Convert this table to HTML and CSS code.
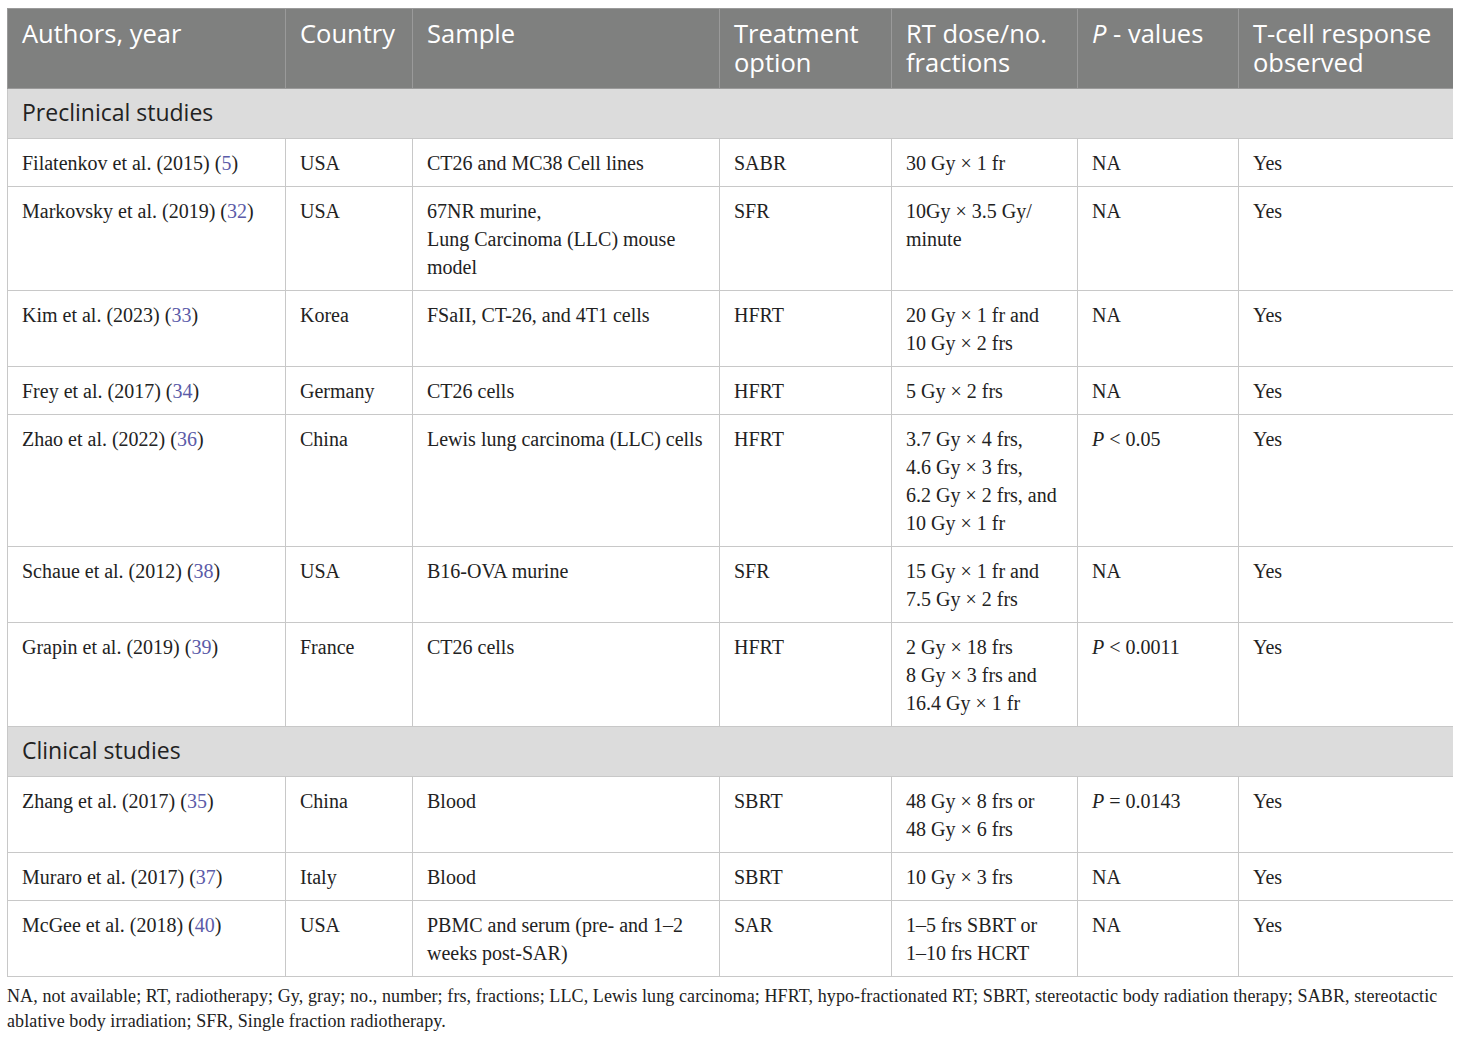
FILE: index.html
```html
<!DOCTYPE html>
<html>
<head>
<meta charset="utf-8">
<link rel="stylesheet" href="styles.css">
</head>
<body>
<table class="data">
  <colgroup>
    <col class="c1"><col class="c2"><col class="c3"><col class="c4"><col class="c5"><col class="c6"><col class="c7">
  </colgroup>
  <thead>
    <tr>
      <th>Authors, year</th>
      <th>Country</th>
      <th>Sample</th>
      <th>Treatment option</th>
      <th>RT dose/no. fractions</th>
      <th><i>P</i> - values</th>
      <th>T-cell response observed</th>
    </tr>
  </thead>
  <tbody>
    <tr class="section"><td colspan="7">Preclinical studies</td></tr>
    <tr>
      <td>Filatenkov et al. (2015) (<a class="ref">5</a>)</td>
      <td>USA</td>
      <td>CT26 and MC38 Cell lines</td>
      <td>SABR</td>
      <td>30 Gy × 1 fr</td>
      <td>NA</td>
      <td>Yes</td>
    </tr>
    <tr>
      <td>Markovsky et al. (2019) (<a class="ref">32</a>)</td>
      <td>USA</td>
      <td>67NR murine,<br>Lung Carcinoma (LLC) mouse model</td>
      <td>SFR</td>
      <td>10Gy × 3.5 Gy/ minute</td>
      <td>NA</td>
      <td>Yes</td>
    </tr>
    <tr>
      <td>Kim et al. (2023) (<a class="ref">33</a>)</td>
      <td>Korea</td>
      <td>FSaII, CT-26, and 4T1 cells</td>
      <td>HFRT</td>
      <td>20 Gy × 1 fr and<br>10 Gy × 2 frs</td>
      <td>NA</td>
      <td>Yes</td>
    </tr>
    <tr>
      <td>Frey et al. (2017) (<a class="ref">34</a>)</td>
      <td>Germany</td>
      <td>CT26 cells</td>
      <td>HFRT</td>
      <td>5 Gy × 2 frs</td>
      <td>NA</td>
      <td>Yes</td>
    </tr>
    <tr>
      <td>Zhao et al. (2022) (<a class="ref">36</a>)</td>
      <td>China</td>
      <td>Lewis lung carcinoma (LLC) cells</td>
      <td>HFRT</td>
      <td>3.7 Gy × 4 frs,<br>4.6 Gy × 3 frs,<br>6.2 Gy × 2 frs, and<br>10 Gy × 1 fr</td>
      <td><i>P</i> &lt; 0.05</td>
      <td>Yes</td>
    </tr>
    <tr>
      <td>Schaue et al. (2012) (<a class="ref">38</a>)</td>
      <td>USA</td>
      <td>B16-OVA murine</td>
      <td>SFR</td>
      <td>15 Gy × 1 fr and<br>7.5 Gy × 2 frs</td>
      <td>NA</td>
      <td>Yes</td>
    </tr>
    <tr>
      <td>Grapin et al. (2019) (<a class="ref">39</a>)</td>
      <td>France</td>
      <td>CT26 cells</td>
      <td>HFRT</td>
      <td>2 Gy × 18 frs<br>8 Gy × 3 frs and<br>16.4 Gy × 1 fr</td>
      <td><i>P</i> &lt; 0.0011</td>
      <td>Yes</td>
    </tr>
    <tr class="section"><td colspan="7">Clinical studies</td></tr>
    <tr>
      <td>Zhang et al. (2017) (<a class="ref">35</a>)</td>
      <td>China</td>
      <td>Blood</td>
      <td>SBRT</td>
      <td>48 Gy × 8 frs or<br>48 Gy × 6 frs</td>
      <td><i>P</i> = 0.0143</td>
      <td>Yes</td>
    </tr>
    <tr>
      <td>Muraro et al. (2017) (<a class="ref">37</a>)</td>
      <td>Italy</td>
      <td>Blood</td>
      <td>SBRT</td>
      <td>10 Gy × 3 frs</td>
      <td>NA</td>
      <td>Yes</td>
    </tr>
    <tr>
      <td>McGee et al. (2018) (<a class="ref">40</a>)</td>
      <td>USA</td>
      <td>PBMC and serum (pre- and 1–2 weeks post-SAR)</td>
      <td>SAR</td>
      <td>1–5 frs SBRT or<br>1–10 frs HCRT</td>
      <td>NA</td>
      <td>Yes</td>
    </tr>
  </tbody>
</table>
<p class="note">NA, not available; RT, radiotherapy; Gy, gray; no., number; frs, fractions; LLC, Lewis lung carcinoma; HFRT, hypo-fractionated RT; SBRT, stereotactic body radiation therapy; SABR, stereotactic ablative body irradiation; SFR, Single fraction radiotherapy.</p>
</body>
</html>
```
FILE: styles.css
```css
body {
  margin: 8px 7px;
  background: #ffffff;
  font-family: "Liberation Serif", "Times New Roman", serif;
  color: #222222;
}
.data {
  width: 1446px;
  border-collapse: collapse;
  table-layout: fixed;
  border: 1px solid #c8c8c8;
}
.c1 { width: 278px; }
.c2 { width: 127px; }
.c3 { width: 307px; }
.c4 { width: 172px; }
.c5 { width: 186px; }
.c6 { width: 161px; }
.c7 { width: 215px; }
.data th {
  background: #7f807f;
  color: #ffffff;
  font-family: "Open Sans", "Noto Sans", sans-serif;
  font-weight: 400;
  font-size: 25.5px;
  line-height: 29px;
  text-align: left;
  vertical-align: top;
  padding: 10px 14px 11px 14px;
  border: 1px solid #9a9a9a;
}
.data td {
  font-size: 20px;
  line-height: 28px;
  vertical-align: top;
  padding: 10px 14px 9px 14px;
  border: 1px solid #c8c8c8;
}
.data tr.section td {
  background: #dcdcdc;
  font-family: "Open Sans", "Noto Sans", sans-serif;
  font-size: 23px;
  line-height: 30px;
  padding: 8px 14px 11px 14px;
  color: #222222;
}
.ref {
  color: #5b5ba8;
  text-decoration: none;
}
.note {
  margin: 7px 0 0 0;
  font-size: 18px;
  letter-spacing: 0.1px;
  line-height: 25px;
  color: #222222;
}
```
